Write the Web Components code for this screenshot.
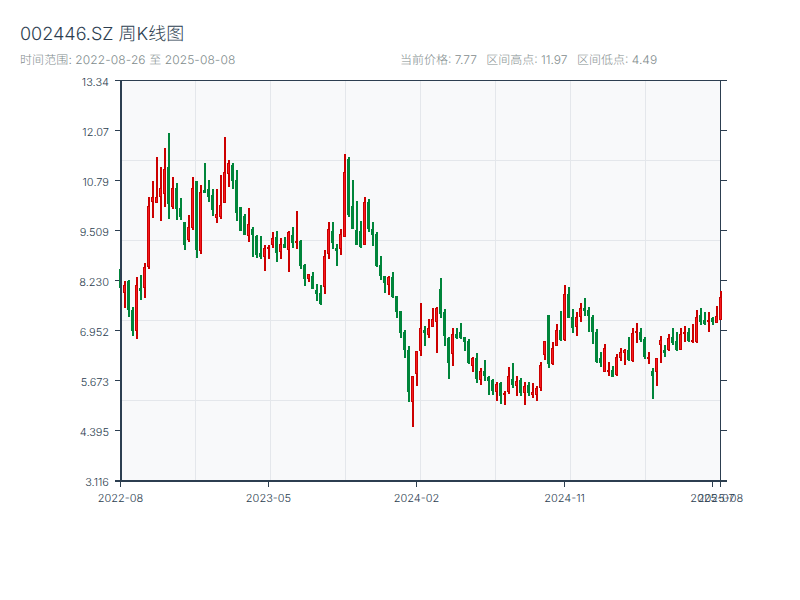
<!DOCTYPE html>
<html lang="zh">
<head>
<meta charset="utf-8">
<title>002446.SZ</title>
<style>
  html, body { margin: 0; background: #fff; }
  body { font-family: Inter, "Noto Sans CJK SC", sans-serif; font-weight: 300; text-rendering: geometricPrecision; }
</style>
</head>
<body>
<stock-page>
  <stock-header symbol="002446.SZ 周K线图">
    <span slot="range">时间范围: 2022-08-26 至 2025-08-08</span>
    <stat-item slot="stats">当前价格: 7.77</stat-item>
    <stat-item slot="stats">区间高点: 11.97</stat-item>
    <stat-item slot="stats">区间低点: 4.49</stat-item>
  </stock-header>
  <kline-chart></kline-chart>
</stock-page>

<script>
(function(){

  // candles read as pixel rows: high, low, body top, body bottom, u = up (red), d = down (green)
  const CANDLES = `269 288 269 288 d|281 308 285 293 u|280 317 281 310 d|307 336 310 331 d|277 339 285 331 u|275 300 288 291 d|263 298 267 288 u|197 269 206 267 u
181 218 197 202 u|157 203 197 203 u|167 221 188 197 u|148 207 169 194 u|133 219 167 204 d|177 209 188 207 u|183 220 188 209 d|198 220 208 217 d
222 250 222 245 d|215 242 227 240 u|177 230 188 228 u|181 258 181 250 d|185 254 192 251 u|163 193 190 193 d|180 202 189 197 d|189 216 195 210 d
189 223 214 218 u|175 219 205 217 u|137 203 172 203 u|160 187 163 174 u|163 189 165 181 d|170 221 180 213 d|207 231 207 231 d|214 235 216 235 d
208 242 224 236 u|227 257 229 235 d|235 258 236 255 d|236 259 253 257 d|245 271 248 257 u|245 259 247 249 u|232 248 238 245 u|231 262 237 253 d
238 259 244 252 u|237 248 244 248 d|231 272 232 250 u|227 248 235 243 d|211 249 241 243 u|240 269 241 266 d|264 286 265 279 d|274 282 274 279 u
272 289 276 289 d|284 301 290 294 d|285 305 293 304 d|250 294 256 287 u|222 259 229 254 u|222 249 231 243 d|244 266 248 251 d|229 255 234 249 u
154 237 172 237 u|157 217 159 215 d|180 229 206 229 d|201 245 230 245 d|221 248 231 247 d|197 245 202 245 u|199 232 202 229 d|222 246 229 235 d
232 267 234 266 d|256 280 265 276 d|276 293 276 283 d|276 295 277 285 u|272 298 277 297 d|296 318 296 312 d|311 338 311 333 d|330 358 332 350 d
346 402 350 392 d|376 427 376 402 u|351 386 351 374 u|303 356 328 351 u|326 346 330 333 d|319 338 328 335 u|308 327 319 327 u|307 353 308 322 u
278 318 289 314 d|309 346 312 336 d|337 379 338 363 d|328 366 334 354 u|328 339 334 338 d|323 339 332 338 d|337 351 337 342 d|339 364 341 363 d
357 372 358 366 u|353 383 358 379 d|368 385 371 380 u|360 381 371 376 d|376 395 377 381 d|379 395 380 391 d|382 401 384 392 u|382 404 383 396 d
391 405 393 395 u|367 394 376 392 u|363 388 379 385 d|376 396 381 386 u|378 396 380 393 d|382 405 386 393 u|382 396 385 393 d|383 398 392 395 u
386 401 388 395 u|362 391 365 388 u|341 360 341 355 u|315 368 315 364 d|342 365 348 364 u|324 346 330 346 u|311 341 330 340 d|285 341 294 340 u
287 318 294 318 d|309 333 317 328 d|312 336 317 327 u|303 322 308 317 u|298 316 308 311 d|307 332 310 316 d|315 344 317 332 d|329 363 332 362 d
352 367 358 363 d|344 372 348 372 u|362 376 370 372 u|366 377 370 377 d|354 376 357 375 u|348 361 352 358 u|349 365 350 353 u|337 361 350 360 d
328 362 333 361 u|323 343 331 333 u|328 342 332 340 d|337 359 339 357 d|352 364 357 359 u|368 399 371 376 d|358 386 358 372 u|336 363 340 345 u
345 357 350 353 d|334 351 338 350 u|328 345 337 343 d|332 351 341 350 d|328 350 334 350 u|326 342 332 334 u|328 342 332 341 d|324 343 340 342 u
310 343 317 342 u|308 325 315 322 d|312 325 320 324 d|312 332 320 322 u|317 325 318 322 d|306 323 316 323 u|291 320 297 320 u`
    .split(/[|\n]/).map(s => s.trim().split(" "));

  const PLOT = { left: 121, right: 721, top: 81, bottom: 481 };
  const TOP_OFFSET = 70; // svg starts below the header
  const STEP = 4;
  const Y_TICKS = ["13.34","12.07","10.79","9.509","8.230","6.952","5.673","4.395","3.116"];
  const X_TICKS = [["2022-08",0],["2023-05",37],["2024-02",74],["2024-11",111],["2025-07",148],["2025-08",150]];

  class StockPage extends HTMLElement {
    constructor() {
      super();
      this.attachShadow({ mode: "open" }).innerHTML = `
        <style>
          :host { display: flex; flex-direction: column; width: 800px; height: 600px; background: #fff; overflow: hidden; }
        </style>
        <slot></slot>`;
    }
  }

  class StatItem extends HTMLElement {
    constructor() {
      super();
      this.attachShadow({ mode: "open" }).innerHTML = `
        <style>:host { display: inline-block; }</style>
        <slot></slot>`;
    }
  }

  class StockHeader extends HTMLElement {
    constructor() {
      super();
      this.attachShadow({ mode: "open" }).innerHTML = `
        <style>
          :host { display: block; box-sizing: border-box; height: 70px; padding: 23px 20px 0; }
          h1 { margin: 0 0 5px; font-size: 18px; line-height: 24px; font-weight: 300; color: #2c3e50; }
          .sub { display: grid; grid-template-columns: 380px auto; font-size: 12px; line-height: 16px; color: #7f8c8d; }
          .range { letter-spacing: .1px; }
          .stats { display: flex; gap: 9.5px; }
        </style>
        <h1></h1>
        <div class="sub">
          <div class="range"><slot name="range"></slot></div>
          <div class="stats"><slot name="stats"></slot></div>
        </div>`;
    }
    connectedCallback() {
      this.shadowRoot.querySelector("h1").textContent = this.getAttribute("symbol");
    }
  }

  class KlineChart extends HTMLElement {
    constructor() {
      super();
      this.attachShadow({ mode: "open" }).innerHTML = `
        <style>
          :host { display: block; width: 800px; height: 530px; }
          svg { display: block; }
          text { font-size: 11px; fill: #2c3e50; }
          .grid { stroke: #e4e7eb; stroke-width: 1; }
          .axis { stroke: #2c3e50; stroke-width: 1; fill: none; }
          .u .wick { stroke: #cc0000; }
          .u .body { fill: #f41a1f; stroke: #cc0000; }
          .d .wick { stroke: #00853a; }
          .d .body { fill: #00853a; stroke: #00853a; }
          .wick { stroke-width: 2; }
          .body { stroke-width: 1; }
        </style>
        <svg width="800" height="530"></svg>`;
    }

    connectedCallback() {
      const { left, right, top, bottom } = PLOT;
      let out = `<g transform="translate(0,${-TOP_OFFSET})">`;
      out += `<rect x="${left}" y="${top}" width="${right - left}" height="${bottom - top}" fill="#f8f9fa"/>`;

      for (let x = left + 74.5; x < right; x += 75) out += `<line class="grid" x1="${x}" x2="${x}" y1="${top}" y2="${bottom}"/>`;
      for (let y = top + 79.5; y < bottom; y += 80) out += `<line class="grid" x1="${left}" x2="${right}" y1="${y}" y2="${y}"/>`;

      // axes under the candles on the right, left one goes on top afterwards
      out += `<path class="axis" d="M${left - 6},${top - .5}H${right + 6}M${right - .5},${top}V${bottom}"/>`;
      Y_TICKS.forEach((label, i) => {
        const y = top + i * 50 - .5;
        out += `<line class="axis" x1="${left - 6}" x2="${left}" y1="${y}" y2="${y}"/>`;
        out += `<line class="axis" x1="${right}" x2="${right + 6}" y1="${y}" y2="${y}"/>`;
        out += `<text x="${left - 12}" y="${y + 5}" text-anchor="end">${label}</text>`;
      });

      CANDLES.forEach((c, i) => {
        const x = left + i * STEP;
        const [hi, lo, t, b, dir] = c;
        out += `<g class="${dir}"><line class="wick" x1="${x}" x2="${x}" y1="${hi}" y2="${lo}"/>` +
          `<rect class="body" x="${x - 1.5}" y="${+t + .5}" width="2" height="${Math.max(b - t - 1, 0)}"/></g>`;
      });

      out += `<path class="axis" style="stroke-width:2" d="M${left},${top - 1}V${bottom + 1}M${left - 6},${bottom}H${right + 6}"/>`;
      X_TICKS.forEach(([label, i]) => {
        const x = left + i * STEP - .5;
        out += `<line class="axis" x1="${x}" x2="${x}" y1="${bottom}" y2="${bottom + 6}"/>`;
        out += `<text x="${x}" y="${bottom + 21}" text-anchor="middle">${label}</text>`;
      });
      out += "</g>";
      this.shadowRoot.querySelector("svg").innerHTML = out;
    }
  }

  customElements.define("stat-item", StatItem);
  customElements.define("stock-header", StockHeader);
  customElements.define("kline-chart", KlineChart);
  customElements.define("stock-page", StockPage);

})();
</script>
</body>
</html>
